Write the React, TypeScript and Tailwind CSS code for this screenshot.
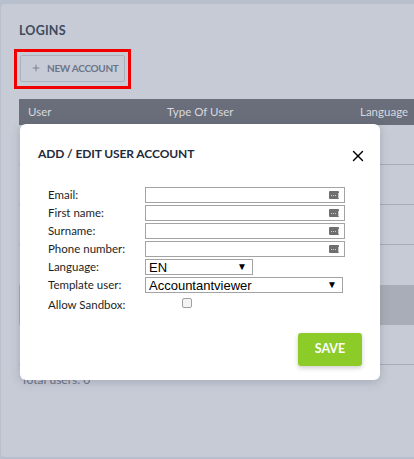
import { X, Plus } from 'lucide-react';

const FIELDS = ['Email:', 'First name:', 'Surname:', 'Phone number:'];

function KeyIcon() {
  // small autofill badge shown at the right of text inputs
  return (
    <span className="absolute right-[5px] top-[3px] w-[10px] h-[8px] rounded-[1px] bg-[#6f6f6f] flex items-center pl-[2px] gap-[1px]">
      <span className="w-[1px] h-[1px] bg-[#d0d0d0]" />
      <span className="w-[1px] h-[1px] bg-[#d0d0d0]" />
      <span className="w-[1px] h-[1px] bg-[#d0d0d0]" />
      <span className="ml-[1px] w-[1px] h-[5px] bg-[#d0d0d0]" />
    </span>
  );
}

function TextInput() {
  return (
    <div className="relative w-[200px] h-[16px] border border-[#a3a3a3] bg-white">
      <KeyIcon />
    </div>
  );
}

function Select({ value, width }: { value: string; width: string }) {
  return (
    <div className={`${width} h-[16px] border border-[#a3a3a3] bg-white flex items-center justify-between pl-[3px] pr-[5px] text-[13px] leading-none text-black`}
      style={{ fontFamily: 'Arial, "Liberation Sans", sans-serif' }}>
      <span>{value}</span>
      <span className="text-[10px]">▼</span>
    </div>
  );
}

export default function App() {
  return (
    <div className="relative w-[414px] h-[459px] overflow-hidden bg-[#b9c0cd] pt-[4px] pl-[1px]"
      style={{ fontFamily: 'Lato, "Open Sans", sans-serif' }}>
      {/* Page panel */}
      <div className="h-[453px] rounded-l-[4px] bg-[#c7cbd6] pl-[18px] pt-[21px]">
        <h2 className="text-[12.5px] font-bold tracking-[0.2px] text-[#3e4a5e] leading-none">LOGINS</h2>

        <div className="mt-[11px] ml-[-5px] w-[117px] h-[40px] border-[3px] border-[#f00000] p-[3px]">
          <button className="w-[105px] h-[27px] border border-[#aab0bd] rounded-[2px] flex items-center pl-[10px] gap-[6px] text-[10px] font-bold tracking-[-0.3px] text-[#6c7488]">
            <Plus className="w-[10px] h-[10px]" strokeWidth={2} />
            NEW ACCOUNT
          </button>
        </div>

        {/* Logins table */}
        <div className="mt-[10px]">
          <div className="h-[26px] bg-[#6a6e7a] flex items-center text-[11.5px] text-[#d6d9df]">
            <span className="w-[148px] pl-[9px]">User</span>
            <span className="w-[193px]">Type Of User</span>
            <span>Language</span>
          </div>
          <div className="h-[40px] border-b border-[#a8adb8]" />
          <div className="h-[40px] border-b border-[#a8adb8]" />
          <div className="h-[40px] border-b border-[#a8adb8]" />
          <div className="h-[40px]" />
          <div className="h-[40px] bg-[#a9adb8]" />
          <div className="h-[40px] border-b border-[#a8adb8]" />
          <p className="mt-[6px] pl-[2px] text-[12px] text-[#6c7488]">Total users: 0</p>
        </div>
      </div>

      {/* Add / edit dialog */}
      <div className="absolute left-[20px] top-[124px] w-[360px] h-[256px] bg-white rounded-[6px] shadow-[0_2px_10px_rgba(60,70,90,0.25)] pl-[18px] pt-[24px]">
        <div className="flex items-start justify-between pr-[12px]">
          <h3 className="text-[12px] font-bold tracking-[-0.1px] text-[#1f2b3c] leading-none">ADD / EDIT USER ACCOUNT</h3>
          <X className="w-[18px] h-[18px] mt-[-1px] mr-[1px] text-black" strokeWidth={1.8} />
        </div>

        <div className="mt-[22px] pl-[10px] flex flex-col gap-[2px] text-[11.5px] text-[#1e1e1e]">
          {FIELDS.map((f) => (
            <div key={f} className="flex items-center h-[16px]">
              <span className="w-[97px]">{f}</span>
              <TextInput />
            </div>
          ))}
          <div className="flex items-center h-[16px]">
            <span className="w-[97px]">Language:</span>
            <Select value="EN" width="w-[108px]" />
          </div>
          <div className="flex items-center h-[16px]">
            <span className="w-[97px]">Template user:</span>
            <Select value="Accountantviewer" width="w-[198px]" />
          </div>
          <div className="flex items-center h-[20px]">
            <span className="w-[134px]">Allow Sandbox:</span>
            <span className="w-[10px] h-[10px] rounded-[2px] border border-[#a0a0a0] bg-[#f4f4f4] mb-[4px]" />
          </div>
        </div>

        <div className="flex justify-end pr-[18px] mt-[18px]">
          <button className="w-[64px] h-[33px] rounded-[3px] bg-[#8ccb28] text-white text-[12.5px] font-bold shadow-[0_2px_5px_rgba(0,0,0,0.2)]">
            SAVE
          </button>
        </div>
      </div>
    </div>
  );
}
